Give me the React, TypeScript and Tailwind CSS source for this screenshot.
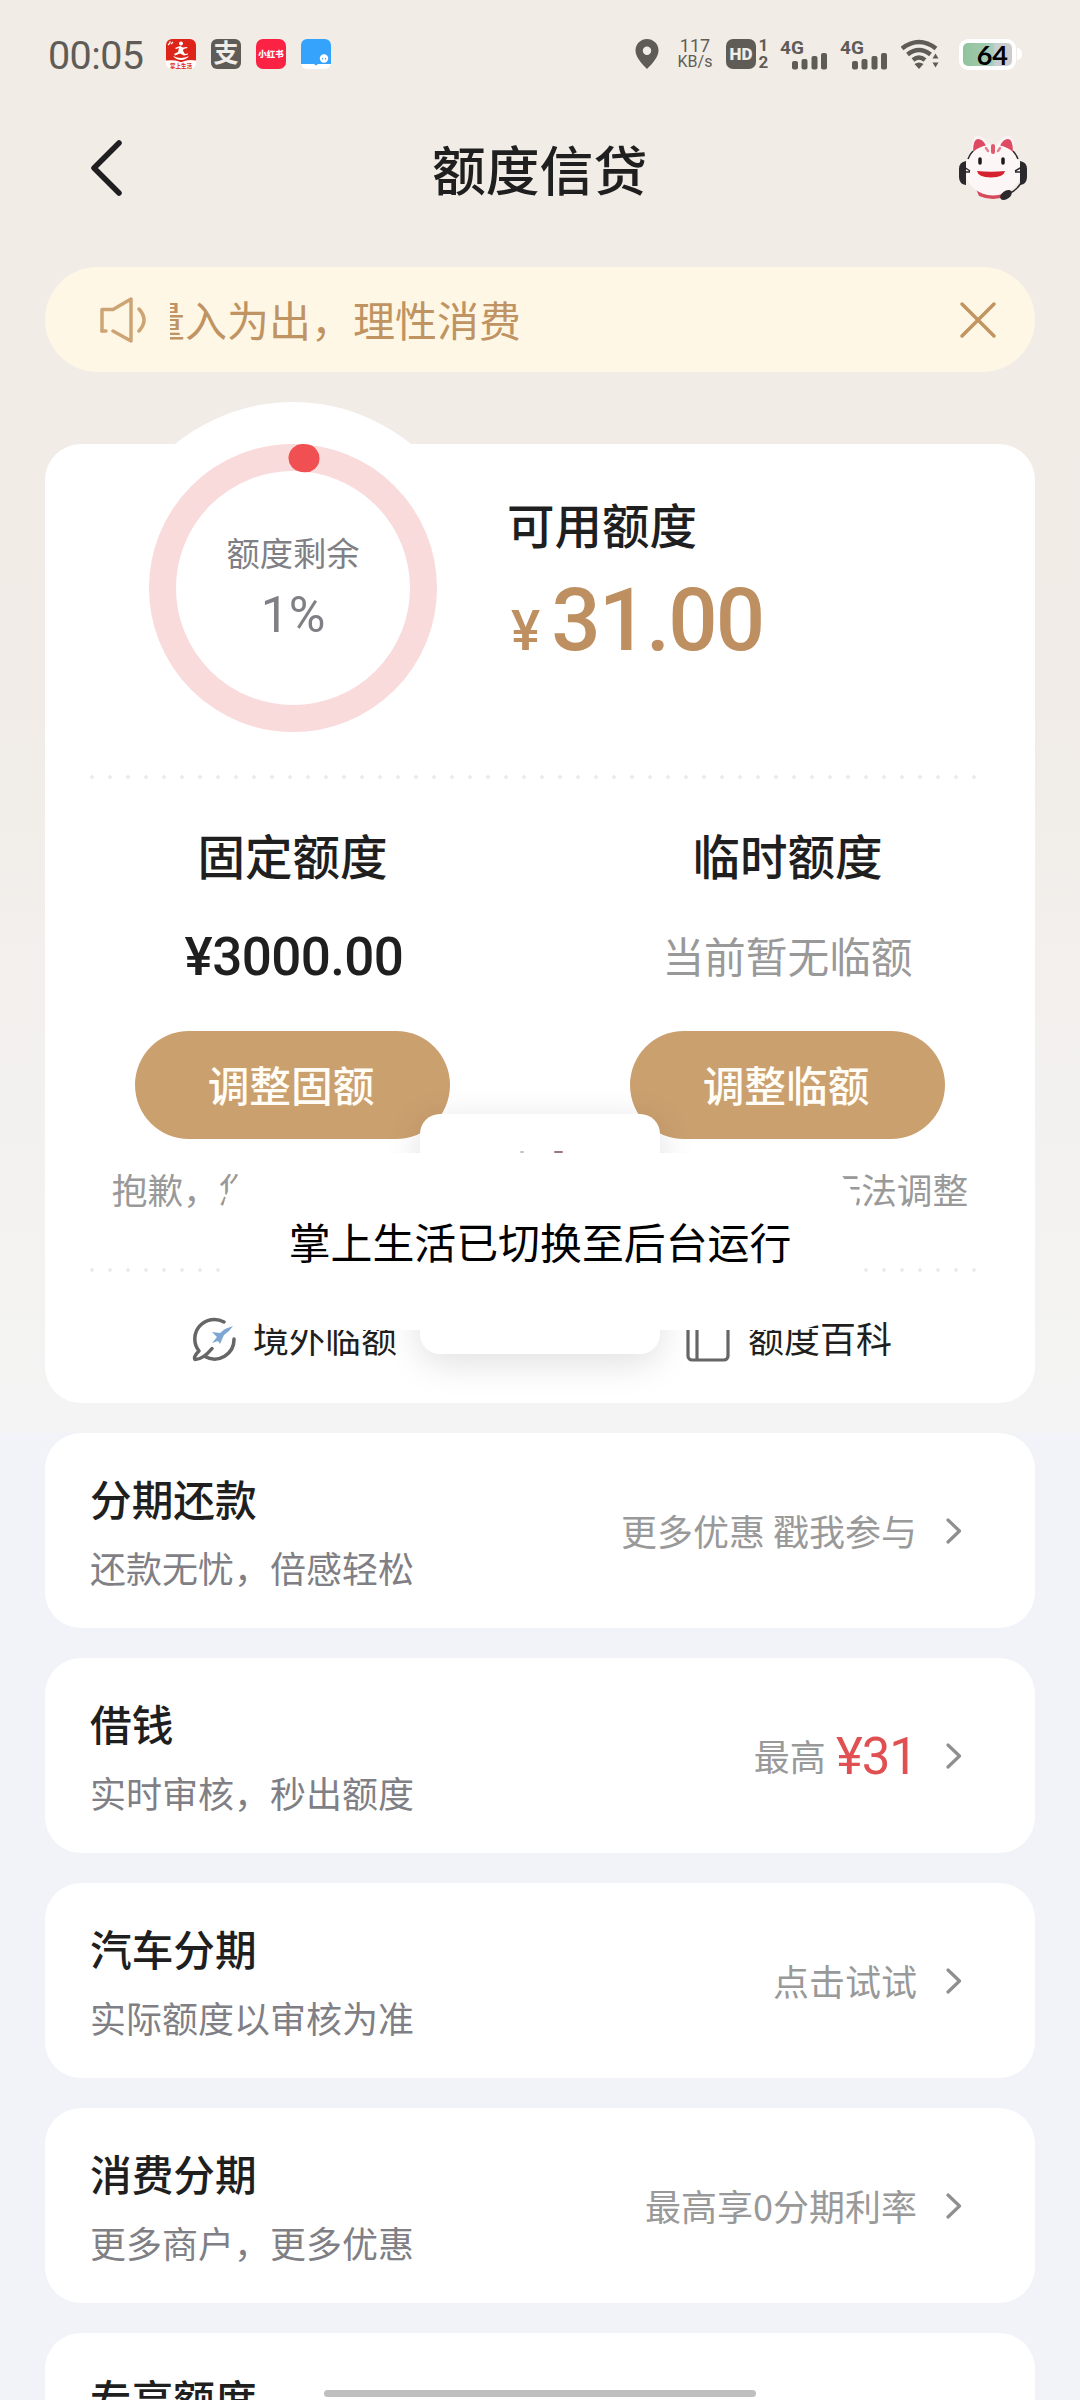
import { useState } from "react";
import type { ReactNode } from "react";

interface Product {
  title: string;
  desc: string;
  hint: string;
  amount?: string;
}

const PRODUCTS: Product[] = [
  { title: "分期还款", desc: "还款无忧，倍感轻松", hint: "更多优惠 戳我参与" },
  { title: "借钱", desc: "实时审核，秒出额度", hint: "最高", amount: "¥31" },
  { title: "汽车分期", desc: "实际额度以审核为准", hint: "点击试试" },
  { title: "消费分期", desc: "更多商户，更多优惠", hint: "最高享0分期利率" },
  { title: "专享额度", desc: "专属礼遇，尊享额度", hint: "点击查看" },
];

function Signal() {
  return (
    <div className="relative h-[31px] w-[48px]">
      <span className="absolute left-0 top-0 text-[19px] font-bold leading-[17px]">4G</span>
      <svg width="48" height="31" viewBox="0 0 48 31" fill="#5f5c58">
        <rect x="12" y="22" width="6" height="8.500" rx="2" />
        <rect x="21.500" y="20" width="6" height="10.500" rx="2" />
        <rect x="31.500" y="17" width="6" height="13.500" rx="2" />
        <rect x="41" y="14" width="6" height="16.500" rx="2" />
      </svg>
    </div>
  );
}

function StatusBar() {
  return (
    <div className="flex h-[108px] items-center pl-[48px] pr-[58px] font-['Roboto','Noto_Sans_CJK_SC',sans-serif] text-[#5f5c58]">
      <span className="w-[118px] pt-[4px] text-[39.500px] leading-none tracking-[-0.600px]">00:05</span>
      <div className="flex gap-[15px]">
        <svg width="30" height="30" viewBox="0 0 30 30">
          <rect width="30" height="30" rx="6" fill="#fff" />
          <path d="M6 0h18a6 6 0 0 1 6 6v15.500q-8-1.500-13 1-2 1-4 0-5-2-13-1V6a6 6 0 0 1 6-6z" fill="#dd2418" />
          <circle cx="15" cy="4.500" r="2" fill="#fff" />
          <path d="M14 7l-5 2 1 1 3-1-1 4-4 2 1 1.500 5-2 4 2 4-1v-1l-3 .5-2-3 .5-2 4-1-.5-1-4 .5zM7 17q8 4 16 0-3 4-8 4t-8-4z" fill="#fff" />
          <path d="M2 6l2-2M5 5l2-2M3 3h2" stroke="#fff" strokeWidth="1.200" />
          <text x="15" y="28.500" fontSize="5.500" fontWeight="700" fill="#dd2418" textAnchor="middle">掌上生活</text>
        </svg>
        <div className="flex h-[30px] w-[30px] items-center justify-center rounded-[6px] bg-[#5f5c58] text-[25px] font-bold leading-[30px] text-[#f1ede7]">支</div>
        <div className="flex h-[30px] w-[30px] items-center justify-center rounded-[7px] bg-[#fb2243] text-[8.500px] font-black leading-[12px] text-white">小红书</div>
        <svg width="30" height="30" viewBox="0 0 30 30">
          <rect width="30" height="30" rx="6" fill="#fff" />
          <path d="M6 0h18a6 6 0 0 1 6 6v19H17l-2 1.500L13 25H0V6a6 6 0 0 1 6-6z" fill="#35a3fb" />
          <circle cx="23" cy="19.500" r="4.200" fill="#fff" />
          <path d="M21.500 19v1.500M24.500 19v1.500" stroke="#35a3fb" strokeWidth="1" />
        </svg>
      </div>

      <div className="ml-auto flex items-center">
        <svg width="24" height="30" viewBox="0 0 24 30">
          <path fillRule="evenodd" d="M12 0a11.500 11.500 0 0 1 11.500 11.500C23.500 18 17 25 12 30 7 25 .5 18 .5 11.500A11.500 11.500 0 0 1 12 0zm0 7.500a4.200 4.200 0 1 0 0 8.400 4.200 4.200 0 0 0 0-8.400z" fill="#5f5c58" />
        </svg>
        <div className="ml-[15px] flex w-[42px] flex-col items-center text-[18px] leading-[16px]">
          <span>117</span>
          <span className="text-[16px]">KB/s</span>
        </div>
        <div className="ml-[10px] flex h-[30px] w-[30px] items-center justify-center rounded-[7px] bg-[#5f5c58] text-[17px] font-black leading-[20px] text-[#f1ede7]">HD</div>
        <div className="ml-[2px] flex w-[11px] flex-col items-center text-[17px] font-bold leading-[17px]">
          <span>1</span>
          <span>2</span>
        </div>
        <div className="ml-[11px] flex gap-3">
          <Signal />
          <Signal />
        </div>
        <svg className="ml-[13px]" width="38" height="30" viewBox="0 0 38 30" fill="none" stroke="#5f5c58" strokeWidth="4.500">
          <path d="M1 9.500Q18 -3.500 35 9.500" />
          <path d="M6.500 15.500Q18 6.500 29.500 15.500" />
          <path d="M12 21Q18 16 24 21" />
          <path d="M13.500 25q4.500-3 9 0l-4.500 5z" fill="#5f5c58" stroke="none" />
          <path d="M31.500 19.500l3-5 3 5zM31.500 23.500h6l-3 5z" fill="#5f5c58" stroke="none" />
        </svg>
        <div className="ml-[20px] flex items-center">
          <div className="flex h-[31px] w-[57px] items-center justify-end rounded-[9px] border-[4px] border-white bg-[linear-gradient(90deg,#8fc39a_0%,#a8ccb8_60%,#c6cfd2_66%,#cdcbcb_100%)] pr-[4px] font-['Lato',sans-serif] text-[27px] font-bold leading-none text-black">64</div>
          <div className="ml-[1px] h-[12px] w-[5px] rounded-r-full bg-white" />
        </div>
      </div>
    </div>
  );
}

function CatService() {
  return (
    <svg width="72" height="66" viewBox="0 0 72 66">
      <path d="M19 54q17 10 34 0l-3 7q-14 6-28 0z" fill="#d64a5b" />
      <path d="M15 24Q13 2 20 1q8-1 14 12zM57 24Q59 2 52 1q-8-1-14 12z" fill="#fbf3f3" />
      <path d="M16 17q0-13 5-13 5 0 8 7-7 1-13 6zM56 17q0-13-5-13-5 0-8 7 7 1 13 6z" fill="#dd4a62" />
      <ellipse cx="36" cy="35" rx="28" ry="25.500" fill="#fdf6f6" />
      <path d="M36 11v6" stroke="#dd5a6c" strokeWidth="4" strokeLinecap="round" />
      <path d="M29 13l2 3M43 13l-2 3" stroke="#e58490" strokeWidth="2.500" strokeLinecap="round" />
      <path d="M23 24v4M46 24v4" stroke="#1d1a1c" strokeWidth="3.500" strokeLinecap="round" />
      <path d="M20 36q14 1.500 28 0-1 6-14 6.500Q21 42 20 36z" fill="#d4232f" />
      <path d="M9 26q-7 1-7 8v8q0 7 7 8zM63 26q7 1 7 8v8q0 7-7 8z" fill="#2b292b" />
      <path d="M7 32l6 4M7 37h6M65 32l-7 4M65 37h-7M11 24q2-5 5-8M61 24q-2-5-5-8M64 48q-5 8-13 11" stroke="#2b292b" strokeWidth="1.500" fill="none" />
      <ellipse cx="49" cy="60" rx="6.500" ry="4" transform="rotate(-35 49 60)" fill="#2b292b" />
    </svg>
  );
}

function QuotaRing() {
  return (
    <div className="-mt-[42px] ml-[62px] flex h-[372px] w-[372px] shrink-0 items-center justify-center rounded-full bg-white">
      <div className="relative flex h-[288px] w-[288px] flex-col items-center rounded-full border-[27px] border-[#f9dbdc] pt-[59px] text-[#7f7f85]">
        <svg className="absolute -left-[27px] -top-[27px]" width="288" height="288" viewBox="0 0 288 288" fill="none">
          <path d="M153.500 14L156.500 14.300" stroke="#f05052" strokeWidth="28" strokeLinecap="round" />
        </svg>
        <span className="text-[33.300px] leading-[44px]">额度剩余</span>
        <span className="mt-[11px] font-['Roboto',sans-serif] text-[50px] leading-[60px]">1%</span>
      </div>
    </div>
  );
}

function DottedLine() {
  return <div className="ml-[38px] mr-[52px] h-[4px] bg-[radial-gradient(circle,#ececec_1.600px,transparent_2.100px)] bg-[length:18px_4px]" />;
}

function QuotaColumn({ title, children, action }: { title: string; children: ReactNode; action: string }) {
  return (
    <div className="flex w-1/2 flex-col items-center">
      <h2 className="text-[47.500px] font-medium leading-[60px]">{title}</h2>
      <div className="mt-[40px] flex h-[60px] items-center">{children}</div>
      <button className="mt-[46px] h-[108px] w-[315px] rounded-full bg-[#cba06f] pb-[1px] pr-[3px] text-[41.700px] font-medium text-[#fffdf6]">
        {action}
      </button>
    </div>
  );
}

function ProductCard({ product }: { product: Product }) {
  return (
    <div className="flex h-[195px] shrink-0 items-center justify-between rounded-[36px] bg-white pl-[45px] pr-[73px]">
      <div className="flex flex-col pb-[1px]">
        <span className="text-[41.700px] font-medium leading-[60px]">{product.title}</span>
        <span className="mt-[14px] text-[36px] leading-[50px] text-[#7f7f85]">{product.desc}</span>
      </div>
      <div className="flex items-center text-[#999]">
        <span className="pb-[2px] text-[36px] leading-[50px]">{product.hint}</span>
        {product.amount && (
          <span className="ml-[10px] pt-[2px] font-['Roboto',sans-serif] text-[51px] leading-[50px] tracking-[-1px] text-[#e05052]">{product.amount}</span>
        )}
        <svg className="ml-[29px]" width="16" height="28" viewBox="0 0 16 28" fill="none" stroke="#8f8f8f" strokeWidth="3.200" strokeLinecap="round" strokeLinejoin="round">
          <path d="M2 3l11.500 11L2 25" />
        </svg>
      </div>
    </div>
  );
}

export default function App() {
  const [noticeOpen, setNoticeOpen] = useState(true);

  return (
    <div className="relative flex h-[2400px] w-[1080px] flex-col overflow-hidden bg-[#f2f3f8] font-['Noto_Sans_CJK_SC',sans-serif] text-[#1f1f1f]">
      <div className="h-[1433px] shrink-0 bg-[linear-gradient(180deg,#f1ece6_0%,#f1ece7_50%,#f3f1ef_75%,#f4f4f4_100%)]">
        <StatusBar />

        <header className="flex h-[120px] items-center pl-[90px] pr-[51px]">
          <div className="w-[342px]">
            <svg width="34" height="56" viewBox="0 0 34 56" fill="none" stroke="#1f1f1f" strokeWidth="5.500" strokeLinecap="round" strokeLinejoin="round">
              <path d="M29 3L4 28l25 25" />
            </svg>
          </div>
          <h1 className="flex-1 pb-[1px] text-[53.800px] font-medium leading-[80px]">额度信贷</h1>
          <CatService />
        </header>

        <div className="mx-[45px] mt-[39px] h-[105px]">
          {noticeOpen && (
            <div className="flex h-full items-center rounded-full bg-[#fef7e6] pl-[54px] pr-[38px] text-[#bf9462]">
              <svg width="50" height="46" viewBox="0 0 50 46" fill="none" stroke="#cda574" strokeWidth="3.500" strokeLinecap="round" strokeLinejoin="round">
                <path d="M3 34V12.500h11L32 2v42L14 34" />
                <path d="M3 34h4" />
                <path d="M40 12q10 11 0 22" />
              </svg>
              {/* marquee text, already scrolled past the left edge */}
              <div className="ml-[21px] flex-1 overflow-hidden">
                <p className="-ml-[27px] whitespace-nowrap pb-[1px] text-[42px] leading-[60px]">量入为出，理性消费</p>
              </div>
              <button onClick={() => setNoticeOpen(false)}>
                <svg width="38" height="38" viewBox="0 0 38 38" stroke="#c09560" strokeWidth="3.500" strokeLinecap="round">
                  <path d="M3 3l32 32M35 3L3 35" />
                </svg>
              </button>
            </div>
          )}
        </div>

        <section className="mx-[45px] mt-[72px] h-[959px] rounded-[36px] bg-white">
          <div className="flex h-[331px]">
            <QuotaRing />
            <div className="ml-[28px] pt-[50px]">
              <h2 className="text-[47.500px] font-medium leading-[60px]">可用额度</h2>
              <p className="mt-[21px] flex items-baseline font-['Roboto',sans-serif] font-medium text-[#be8f60]">
                <span className="ml-[4px] text-[55px] leading-[90px]">¥</span>
                <span className="ml-[11px] text-[87px] leading-[90px] tracking-[-2px]">31.00</span>
              </p>
            </div>
          </div>
          <DottedLine />

          <div className="mt-[46px] flex">
            <QuotaColumn title="固定额度" action="调整固额">
              <span className="pl-[3px] pt-[6px] font-['Roboto',sans-serif] text-[53px] font-medium tracking-[-0.600px]">¥3000.00</span>
            </QuotaColumn>
            <QuotaColumn title="临时额度" action="调整临额">
              <span className="text-[41.700px] text-[#999]">当前暂无临额</span>
            </QuotaColumn>
          </div>

          <p className="mt-[25px] whitespace-nowrap text-center text-[35.700px] leading-[50px] text-[#999]">
            抱歉，您目前的固定额度以及临时额度均暂时无法调整
          </p>
          <div className="mt-[54px]">
            <DottedLine />
          </div>

          <div className="mt-[39px] flex text-[36px] leading-[50px]">
            <div className="flex w-1/2 items-center justify-center gap-[16px] pl-[3px]">
              <svg className="mt-[5px]" width="46" height="46" viewBox="0 0 46 46" fill="none" strokeLinecap="round" strokeLinejoin="round">
                <path d="M33 6A19.500 19.500 0 0 0 8 35Q2 41 4 43.500q8 0 17-11" stroke="#666" strokeWidth="3.500" />
                <path d="M14 40.500A19.500 19.500 0 0 0 43 23" stroke="#666" strokeWidth="3.500" />
                <path d="M42 10l-8 3-5 4-8-1 5 5-5 6 6-2 2 3 4-9 5-4z" fill="#7ea6d2" />
              </svg>
              境外临额
            </div>
            <div className="flex w-1/2 items-center justify-center gap-[18px] pl-[3px]">
              <svg className="mt-[5px]" width="44" height="46" viewBox="0 0 44 46" fill="none" stroke="#666" strokeWidth="3.200">
                <rect x="2" y="2" width="40" height="42" rx="4" />
                <path d="M11 2v42" />
              </svg>
              额度百科
            </div>
          </div>
        </section>
      </div>

      <div className="mx-[45px] flex flex-col gap-[30px]">
        {PRODUCTS.map(product => (
          <ProductCard key={product.title} product={product} />
        ))}
      </div>

      {/* Loading box, half hidden by the toast */}
      <div className="absolute left-[420px] top-[1114px] h-[240px] w-[240px] rounded-[20px] bg-white shadow-[0_8px_36px_rgba(0,0,0,0.13)]" />
      <div className="absolute left-[520px] top-[1151px] h-[2px] w-[4px] rounded-full bg-[#c9bfbf]" />
      <div className="absolute left-[554px] top-[1151px] h-[2px] w-[9px] rounded-full bg-[#9c7a7a]" />
      <div className="absolute left-[222px] top-[1153px] flex h-[177px] w-[636px] items-center justify-center rounded-[66px] bg-white text-[41.900px] text-black">
        掌上生活已切换至后台运行
      </div>

      <div className="absolute left-[324px] top-[2390px] h-[7px] w-[432px] rounded-full bg-[#bfbfbf]" />
    </div>
  );
}
